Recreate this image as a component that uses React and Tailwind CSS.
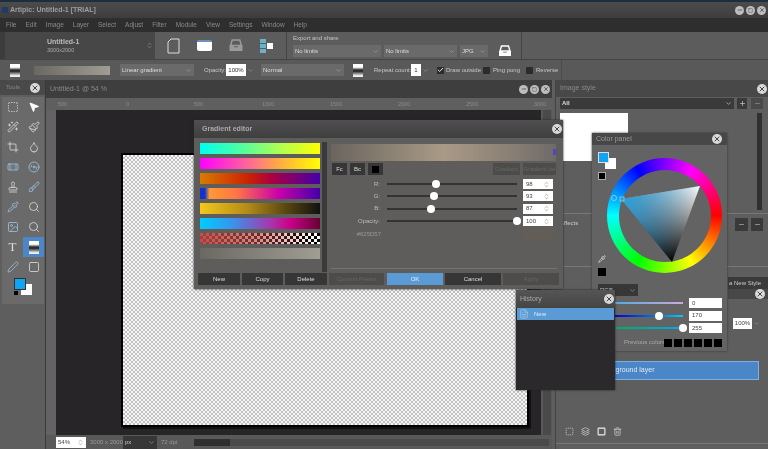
import React from "react";
import { ChevronDown, ChevronsUpDown, Check, MousePointer2, Wand2, Paintbrush, Crop, Droplet, Bandage, Stamp, Pipette, Search, Image, Pen, Square, Trash2, SquareDashed, Layers, Plus, Minus, X, Disc3, Brush, FileText } from "lucide-react";

const Close = ({ className = "" }) => (
  <span className={"flex items-center justify-center w-[10px] h-[10px] rounded-full bg-[#d9d9d9] text-[#444] shrink-0 " + className}>
    <X size={8} strokeWidth={3} />
  </span>
);
const Ctl = ({ children }) => (
  <span className="flex items-center justify-center w-[9px] h-[9px] rounded-full bg-[#bdbdbd] text-[#444] shrink-0">{children}</span>
);
const Sel = ({ w, label, light, className = "" }) => (
  <div className={"flex items-center justify-between h-[12px] px-[2px] text-[6px] whitespace-nowrap shrink-0 " + (light ? "bg-[#6a6a6a] text-[#ddd] " : "bg-[#373737] text-[#ccc] ") + w + " " + className}>
    <span>{label}</span>
    <ChevronDown size={7} className="text-[#aaa]" />
  </div>
);
const GradIcon = () => (
  <div className="w-[10px] h-[13px] bg-[linear-gradient(180deg,#fff_0%,#fff_25%,#333_45%,#222_55%,#eee_90%)] shrink-0" />
);
const CheckBox = ({ on }) => (
  <span className="flex items-center justify-center w-[7px] h-[7px] bg-[#2c2c2c] shrink-0">
    {on && <Check size={8} strokeWidth={3} className="text-white" />}
  </span>
);
const Tray = ({ color = "#fff", w = 14, h = 12 }) => (
  <svg width={w} height={h} viewBox="0 0 14 12" className="shrink-0">
    <path d="M3.5 1h7l1.5 5H2z" fill="none" stroke={color} strokeWidth="1.4" />
    <path d="M1 6h3.5l1 1.6h3l1-1.6H13v5H1z" fill={color} />
  </svg>
);

const toolIcons = [
  [SquareDashed, 1], [MousePointer2, 2], [Wand2, 1], [Paintbrush, 1], [Crop, 0], [Droplet, 1], [Bandage, 3], [Disc3, 3],
  [Stamp, 1], [Brush, 3], [Pipette, 3], [Search, 1], [Image, 3], [Search, 1], ["T", 1], ["G", 1], [Pen, 3], [Square, 1],
];

const gradients = [
  "bg-[linear-gradient(90deg,#00ffee,#44ffaa_30%,#aaff55_65%,#ffff00)]",
  "bg-[linear-gradient(90deg,#ff00ff,#ff6699_40%,#ffaa44_65%,#ffff00)]",
  "bg-[linear-gradient(90deg,#d97a00,#cc2200_40%,#aa0044_60%,#4400aa)]",
  "bg-[linear-gradient(90deg,#1133cc_0%,#1133cc_4%,#ff9933_8%,#ff7744_30%,#cc00aa_65%,#4400aa)]",
  "bg-[linear-gradient(90deg,#f2c81c,#b38a16_40%,#5c4a10_70%,#111)]",
  "bg-[linear-gradient(90deg,#00ccff,#3399ee_25%,#aa33aa_60%,#cc0088_75%,#660033)]",
];

const sliders = [
  ["R:", 38, "98"],
  ["G:", 36, "93"],
  ["B:", 34, "87"],
  ["Opacity:", 100, "100"],
];

const Spin = ({ v }) => (
  <div className="flex items-center justify-between w-[30px] h-[10px] bg-white text-[#444] text-[6px] px-[3px] shrink-0">
    <span>{v}</span>
    <ChevronsUpDown size={7} className="text-[#888]" />
  </div>
);

const DBtn = ({ w, label, tone = "dark" }) => (
  <div className={"flex items-center justify-center h-[12px] text-[6px] whitespace-nowrap shrink-0 " + w + " " + (tone === "dark" ? "bg-[#363636] text-[#ddd]" : tone === "blue" ? "bg-[#5b9bd5] text-[#e8f2fa]" : "bg-[#4d4c4b] text-[#666]")}>
    {label}
  </div>
);

const GradientEditor = () => (
  <div className="absolute left-[194px] top-[120px] w-[369px] h-[169px] bg-[#5f5d5b] flex flex-col shadow-[0_0_2px_#222]">
    <div className="h-[18px] bg-[linear-gradient(180deg,#4f4f4f,#3f3f3f)] flex items-center justify-between pl-[8px] pr-[1px] text-[7px] font-bold text-[#aaa] shrink-0">
      <span>Gradient editor</span>
      <Close />
    </div>
    <div className="flex h-[130px] shrink-0">
      <div className="w-[137px] flex shrink-0 pl-[6px] pt-[4px]">
        <div className="flex flex-col gap-[4px] w-[120px] pt-[1px]">
          {gradients.map((g) => (
            <div key={g} className={"h-[11px] shrink-0 " + g} />
          ))}
          <div className="h-[11px] shrink-0 bg-[repeating-conic-gradient(#000_0_25%,#fff_0_50%)] bg-[length:6px_6px] relative overflow-hidden">
            <div className="h-full bg-[linear-gradient(90deg,#b5443fee,#b5443f99_50%,#b5443f00_95%)]" />
          </div>
          <div className="h-[11px] shrink-0 bg-[linear-gradient(90deg,#6a6862,#a09d93)]" />
        </div>
        <div className="w-[5px] h-[130px] ml-[2px] bg-[#3a3a3a] shrink-0" />
      </div>
      <div className="flex-1 pr-[7px] pt-[6px] flex flex-col">
        <div className="h-[17px] bg-[linear-gradient(90deg,#6b655f,#a89a86_50%,#8a7f75_80%,#6d6a68)] relative shrink-0">
          <span className="absolute right-0 top-[5px] w-[3px] h-[6px] bg-[#5544cc]" />
        </div>
        <div className="flex items-center gap-[3px] mt-[2px] h-[12px] pl-[1px] shrink-0">
          <DBtn w="w-[15px]" label="Fc" />
          <DBtn w="w-[15px]" label="Bc" />
          <div className="w-[15px] h-[12px] bg-[#363636] flex items-center justify-center shrink-0"><span className="w-[7px] h-[7px] bg-black" /></div>
          <div className="flex-1" />
          <DBtn w="w-[27px]" label="Gradient" tone="off" />
          <DBtn w="w-[33px]" label="Gradient list" tone="off" />
        </div>
        <div className="flex flex-col gap-[2.4px] mt-[4px] shrink-0">
          {sliders.map(([l, p, v]) => (
            <div key={l} className="flex items-center h-[10px]">
              <span className="w-[49px] text-right text-[6px] text-[#bbb] shrink-0">{l}</span>
              <div className="relative w-[130px] h-[2px] bg-[#333] ml-[7px] shrink-0">
                <span className="absolute top-[-3px] w-[8px] h-[8px] rounded-full bg-white -ml-[4px]" style={{ left: p + "%" }} />
              </div>
              <div className="ml-[6px]"><Spin v={v} /></div>
            </div>
          ))}
        </div>
        <div className="flex items-center mt-[1px] h-[14px] shrink-0">
          <span className="w-[50px] text-right text-[6px] text-[#999] shrink-0">#625D57</span>
          <div className="ml-[142px] w-[30px] h-[14px] bg-[#625d57]" />
        </div>
      </div>
    </div>
    <div className="h-px bg-[#757371] ml-[137px] mr-[6px] shrink-0" />
    <div className="flex gap-[2px] pl-[4px] mt-[4px]">
      <DBtn w="w-[42px]" label="New" />
      <DBtn w="w-[41px]" label="Copy" />
      <DBtn w="w-[42px]" label="Delete" />
      <DBtn w="w-[55px]" label="Commit Preset" tone="off" />
      <DBtn w="w-[56px] ml-[1px]" label="OK" tone="blue" />
      <DBtn w="w-[56px]" label="Cancel" />
      <DBtn w="w-[56px]" label="Apply" tone="off" />
    </div>
  </div>
);

const colorSliders = [
  ["bg-[linear-gradient(90deg,#55aadd,#ccaadd)]", null, "0"],
  ["bg-[linear-gradient(90deg,#0000dd,#00ccee)]", 65, "170"],
  ["bg-[linear-gradient(90deg,#00aa66,#00aaee)]", 100, "255"],
];

const ColorPanel = () => (
  <div className="absolute left-[592px] top-[133px] w-[135px] h-[218px] bg-[#636363] shadow-[0_0_2px_#333] flex flex-col">
    <div className="h-[12px] bg-[#474747] flex items-center justify-between pl-[4px] pr-[5px] text-[7px] text-[#999] shrink-0">
      <span>Color panel</span>
      <Close />
    </div>
    <div className="relative h-[139px] shrink-0">
      <div className="absolute left-[13px] top-[13px] w-[11px] h-[11px] bg-white" />
      <div className="absolute left-[6px] top-[7px] w-[11px] h-[11px] bg-[#10a4f4] border border-[#ddd]" />
      <div className="absolute left-[6px] top-[27px] w-[8px] h-[8px] bg-black border border-[#aaa]" />
      <div className="absolute left-[15px] top-[13px] w-[115px] h-[115px] rounded-full bg-[conic-gradient(from_90deg,#f00,#ff0,#0f0,#0ff,#00f,#f0f,#f00)] flex items-center justify-center">
        <div className="w-[92px] h-[92px] rounded-full bg-[#636363]" />
      </div>
      <svg className="absolute left-0 top-0" width="135" height="139" viewBox="592 145 135 139">
        <defs>
          <linearGradient id="gbw" gradientUnits="userSpaceOnUse" x1="700" y1="186" x2="672" y2="262">
            <stop offset="0" stopColor="#fff" />
            <stop offset="1" stopColor="#000" />
          </linearGradient>
          <linearGradient id="gc" gradientUnits="userSpaceOnUse" x1="621" y1="199" x2="686" y2="224">
            <stop offset="0" stopColor="#2a9fdc" />
            <stop offset="1" stopColor="#2a9fdc" stopOpacity="0" />
          </linearGradient>
        </defs>
        <polygon points="621,199 700,186 672,262" fill="url(#gbw)" />
        <polygon points="621,199 700,186 672,262" fill="url(#gc)" />
        <rect x="620" y="197" width="4" height="4" fill="none" stroke="#9cc" strokeWidth="0.8" />
        <circle cx="614" cy="198" r="2.6" fill="none" stroke="#9ccfe8" strokeWidth="0.8" />
      </svg>
      <Pipette size={8} className="absolute left-[6px] top-[110px] text-[#ddd]" />
      <div className="absolute left-[6px] top-[123px] w-[8px] h-[8px] bg-black" />
    </div>
    <Sel w="w-[40px]" label="RGB" className="ml-[6px]" />
    <div className="flex flex-col gap-[2.5px] mt-[2px]">
      {colorSliders.map(([g, p, v]) => (
        <div key={v} className="flex items-center pl-[23px] h-[10px]">
          <div className={"relative w-[68px] h-[2px] shrink-0 " + g}>
            {p !== null && <span className="absolute top-[-3px] w-[8px] h-[8px] rounded-full bg-white -ml-[4px]" style={{ left: p + "%" }} />}
          </div>
          <div className="ml-[6px] w-[33px] h-[10px] bg-white text-[6px] text-[#444] px-[3px] flex items-center shrink-0">{v}</div>
        </div>
      ))}
    </div>
    <div className="flex items-center pl-[32px] mt-[5px] gap-[2px]">
      <span className="text-[6px] text-[#aaa] w-[38px] whitespace-nowrap shrink-0">Previous colors:</span>
      {[0, 1, 2, 3, 4, 5].map((i) => (
        <span key={i} className="w-[8px] h-[8px] bg-black shrink-0" />
      ))}
    </div>
  </div>
);

const History = () => (
  <div className="absolute left-[516px] top-[290px] w-[99px] h-[100px] bg-[#2b292c] shadow-[0_0_2px_#222] flex flex-col">
    <div className="h-[18px] bg-[linear-gradient(180deg,#555,#454545)] flex items-center justify-between pl-[4px] pr-[1px] text-[7px] text-[#aaa] shrink-0">
      <span>History</span>
      <Close />
    </div>
    <div className="h-[12px] bg-[#5b9bd5] mx-[1px] flex items-center gap-[5px] pl-[2px] text-[6px] text-[#dceaf7] shrink-0">
      <FileText size={10} strokeWidth={1} />
      <span>New</span>
    </div>
  </div>
);

export default function App() {
  return (
    <div className="relative w-[768px] h-[449px] overflow-hidden bg-[#5e5e5e] font-['Liberation_Sans',Arial,sans-serif] blur-[0.5px]">
      <div className="h-[2px] bg-[#1d2f3f]" />
      <div className="h-[16px] bg-[linear-gradient(180deg,#4c4c4c,#3d3d3d)] flex items-center pl-[2px] pr-[2px] text-[7px] font-bold text-[#9e9e9e]">
        <span className="w-[6px] h-[6px] bg-[#223a6b] mr-[2px] shrink-0" />
        <span className="flex-1">Artipic: Untitled-1 [TRIAL]</span>
        <div className="flex gap-[2px]">
          <Ctl><Minus size={6} strokeWidth={3} /></Ctl>
          <Ctl><Square size={5} strokeWidth={2} /></Ctl>
          <Ctl><X size={6} strokeWidth={3} /></Ctl>
        </div>
      </div>
      <div className="h-[14px] bg-[#2e2e2e] flex items-center pl-[6px] gap-[9px] text-[6.5px] text-[#8a8a8a]">
        {["File", "Edit", "Image", "Layer", "Select", "Adjust", "Filter", "Module", "View", "Settings", "Window", "Help"].map((m) => (
          <span key={m}>{m}</span>
        ))}
      </div>
      <div className="h-[28px] flex bg-[#5c5c5c] border-b border-[#444]">
        <div className="w-[5px] shrink-0 bg-[#3c3c3c]" />
        <div className="w-[150px] bg-[#474747] flex items-center pl-[42px] pr-[2px] shrink-0">
          <div className="flex-1 flex flex-col gap-[1px]">
            <span className="text-[7px] font-bold text-[#bbb] leading-[8px]">Untitled-1</span>
            <span className="text-[5.5px] text-[#aaa] leading-[6px]">3000x2000</span>
          </div>
          <ChevronsUpDown size={7} className="text-[#999]" />
        </div>
        <div className="w-[132px] flex items-center pl-[12px] shrink-0 border-r border-[#444]">
          <svg width="13" height="16" viewBox="0 0 13 16" className="shrink-0">
            <path d="M4 1h8v14H1V4z" fill="none" stroke="#ddd" strokeWidth="1" />
          </svg>
          <div className="ml-[17px] w-[15px] h-[11px] rounded-[2px] bg-[linear-gradient(180deg,#6f8fc0_20%,#fff_22%)] shrink-0" />
          <div className="ml-[16px]"><Tray color="#9a9a9a" w={16} h={13} /></div>
          <div className="ml-[16px] flex items-center">
            <div className="flex flex-col gap-[1px]">
              <span className="w-[6px] h-[4px] bg-[#6ab2c8]" />
              <span className="w-[6px] h-[4px] bg-[#6ab2c8]" />
              <span className="w-[6px] h-[4px] bg-[#6ab2c8]" />
            </div>
            <span className="w-[6px] h-[6px] bg-white ml-[1px]" />
          </div>
        </div>
        <div className="w-[235px] pl-[6px] shrink-0 border-r border-[#444] pt-[2px]">
          <div className="text-[6px] text-[#c4c4c4] leading-[9px]">Export and share</div>
          <div className="flex mt-[2px] items-center">
            <Sel w="w-[88px]" label="No limits" light />
            <Sel w="w-[73px] ml-[3px]" label="No limits" light />
            <Sel w="w-[28px] ml-[3px]" label="JPG" light />
            <div className="ml-[10px]"><Tray /></div>
          </div>
        </div>
      </div>
      <div className="h-[20px] flex items-center bg-[#595959]">
        <div className="w-[562px] h-full flex items-center pl-[10px] border-r border-[#4a4a4a] shrink-0 text-[6px] text-[#c8c8c8] whitespace-nowrap">
          <GradIcon />
          <div className="ml-[14px] w-[76px] h-[9px] bg-[linear-gradient(90deg,#6a6862,#a09d93)] shrink-0" />
          <Sel w="w-[74px] ml-[10px]" label="Linear gradient" light />
          <span className="ml-[10px] w-[22px] shrink-0">Opacity:</span>
          <div className="w-[20px] h-[12px] bg-white text-[#333] flex items-center justify-center shrink-0">100%</div>
          <ChevronDown size={7} className="ml-[1px] text-[#999] shrink-0" />
          <Sel w="w-[83px] ml-[7px]" label="Normal" light />
          <div className="ml-[9px]"><GradIcon /></div>
          <span className="ml-[11px] w-[37px] shrink-0">Repeat count:</span>
          <div className="w-[10px] h-[12px] bg-white text-[#333] flex items-center justify-center shrink-0">1</div>
          <ChevronDown size={7} className="ml-[1px] text-[#999] shrink-0" />
          <div className="ml-[8px]"><CheckBox on /></div>
          <span className="ml-[2px] w-[37px] shrink-0">Draw outside</span>
          <CheckBox />
          <span className="ml-[3px] w-[33px] shrink-0">Ping pong</span>
          <CheckBox />
          <span className="ml-[3px]">Reverse</span>
        </div>
      </div>
      <div className="flex h-[369px]">
        <div className="w-[46px] shrink-0 border-r border-[#3a3a3a]">
          <div className="h-[15px] bg-[#494949] flex items-center justify-between pl-[6px] pr-[5px] text-[6px] text-[#888]">
            <span>Tools</span>
            <Close />
          </div>
          <div className="grid grid-cols-2 auto-rows-[20px] w-[42px] ml-[2px] mt-[2px] bg-[#6a6a6a]">
            {toolIcons.map(([I, k], i) => (
              <div key={i} className={"flex items-center justify-center " + (I === "G" ? "bg-[#4a86c8]" : "")}>
                {I === "T" ? (
                  <span className="text-[13px] font-['Liberation_Serif',serif] text-[#ddd]">T</span>
                ) : I === "G" ? (
                  <GradIcon />
                ) : (
                  <I size={12} strokeWidth={1.6} className={k === 2 ? "text-white fill-white" : k === 3 ? "text-[#9ec4e4]" : "text-[#ddd]"} />
                )}
              </div>
            ))}
          </div>
          <div className="relative w-[42px] ml-[2px] h-[27px] bg-[#6a6a6a]">
            <div className="absolute left-[12px] top-[1px] w-[12px] h-[12px] bg-[#10a4f4] border border-[#333] z-10" />
            <div className="absolute left-[19px] top-[7px] w-[11px] h-[11px] bg-white" />
            <div className="absolute left-[12px] top-[14px] w-[4px] h-[4px] bg-black" />
          </div>
        </div>
        <div className="w-[506px] shrink-0 flex flex-col bg-[#595959]">
          <div className="h-[18px] bg-[#3e3e3e] flex items-center justify-between pl-[4px] pr-[2px] text-[7px] text-[#888] shrink-0">
            <span>Untitled-1 @ 54 %</span>
            <div className="flex gap-[2px]">
              <Ctl><Minus size={6} strokeWidth={3} /></Ctl>
              <Ctl><Square size={5} strokeWidth={2} /></Ctl>
              <Ctl><X size={6} strokeWidth={3} /></Ctl>
            </div>
          </div>
          <div className="h-[12px] bg-[#5f5f5f] flex items-center text-[5.5px] text-[#8c8c8c] pl-[12px] overflow-hidden shrink-0">
            {["500", "0", "500", "1000", "1500", "2000", "2500", "3000"].map((t, i) => (
              <span key={i} className="w-[68px] shrink-0">{t}</span>
            ))}
          </div>
          <div className="flex h-[325px] shrink-0">
            <div className="w-[10px] bg-[#636363] shrink-0" />
            <div className="w-[485px] bg-[#272527] pt-[43px] pl-[65px] shrink-0">
              <div className="w-[408px] h-[274px] border-2 border-black bg-[repeating-conic-gradient(#c0c0c0_0_25%,#f6f6f6_0_50%)] bg-[length:4px_4px] shadow-[2px_2px_0_#111]" />
            </div>
            <div className="w-[8px] ml-[2px] bg-[#4a4a4a] shrink-0" />
          </div>
          <div className="flex items-center h-[14px] pl-[10px] text-[6px] text-[#999] whitespace-nowrap shrink-0">
            <div className="flex items-center justify-between w-[30px] h-[11px] bg-white text-[#444] px-[2px] shrink-0">
              <span>54%</span>
              <ChevronsUpDown size={7} className="text-[#888]" />
            </div>
            <span className="ml-[4px] w-[33px] shrink-0">3000 x 2000</span>
            <Sel w="w-[34px]" label="px" className="h-[13px]" />
            <span className="ml-[4px] w-[33px] shrink-0">72 dpi</span>
            <div className="h-[7px] w-[355px] bg-[#4a4a4a] shrink-0">
              <div className="w-[36px] h-full bg-[#2f2f2f]" />
            </div>
          </div>
        </div>
        <div className="flex-1 ml-[3px] border-l border-[#444] flex flex-col">
          <div className="h-[17px] bg-[#484848] flex items-center justify-between pl-[4px] pr-[1px] text-[7px] text-[#888] shrink-0">
            <span>Image style</span>
            <Close />
          </div>
          <div className="flex items-center pl-[4px] mt-[1px] shrink-0">
            <div className="w-[174px] h-[11px] bg-[#3a3a3a] flex items-center justify-between px-[2px] text-[6px] font-bold text-[#ddd] shrink-0">
              <span>All</span>
              <ChevronDown size={7} />
            </div>
            <div className="ml-[3px] w-[10px] h-[11px] bg-[#3a3a3a] flex items-center justify-center text-[#ddd] shrink-0"><Plus size={7} /></div>
            <div className="ml-[4px] w-[12px] h-[11px] bg-[#4a4a4a] flex items-center justify-center text-[#999] shrink-0"><Minus size={7} /></div>
          </div>
          <div className="flex pl-[4px] mt-[4px] h-[100px] shrink-0">
            <div className="w-[68px] h-[48px] bg-white" />
            <div className="w-[5px] h-[97px] ml-[129px] bg-[#303030] shrink-0" />
          </div>
          <div className="h-[54px] border-t border-b border-[#777] flex pl-[4px] pt-[4px] text-[6px] text-[#ccc] shrink-0">
            <span className="w-[175px] shrink-0 pt-[1px]">Effects</span>
            <div className="w-[13px] h-[13px] bg-[#3a3a3a] flex items-center justify-center shrink-0"><Minus size={7} /></div>
            <div className="ml-[3px] w-[12px] h-[13px] bg-[#3a3a3a] flex items-center justify-center shrink-0"><Minus size={7} /></div>
          </div>
          <div className="flex justify-end mt-[10px] shrink-0">
            <div className="w-[40px] h-[12px] bg-[#3a3a3a] text-[6px] text-[#ccc] flex items-center pl-[1px] whitespace-nowrap">a New Style</div>
          </div>
          <div className="flex justify-end shrink-0">
            <div className="w-[40px] h-[10px] bg-[#484848] flex justify-end items-center pr-[3px]"><Close /></div>
          </div>
          <div className="flex-1 flex flex-col min-h-0 border-b border-[#777] mb-[5px]">
            <div className="flex items-center justify-end pr-[8px] mt-[19px] shrink-0">
              <div className="w-[19px] h-[11px] bg-white text-[6px] text-[#444] flex items-center justify-center">100%</div>
              <ChevronDown size={7} className="ml-[1px] text-[#999]" />
            </div>
            <div className="ml-[5px] mr-[9px] mt-[32px] h-[19px] bg-[#4a86c8] border border-[#7fb0dd] text-[7px] text-[#ddeaf5] flex items-center pl-[38px] shrink-0">Background layer</div>
            <div className="flex gap-[7px] pl-[9px] mt-[47px] text-[#ccc] shrink-0">
              <SquareDashed size={9} />
              <Layers size={9} />
              <Square size={9} strokeWidth={3} className="text-[#eee]" />
              <Trash2 size={9} />
            </div>
          </div>
        </div>
      </div>
      <GradientEditor />
      <ColorPanel />
      <History />
    </div>
  );
}
